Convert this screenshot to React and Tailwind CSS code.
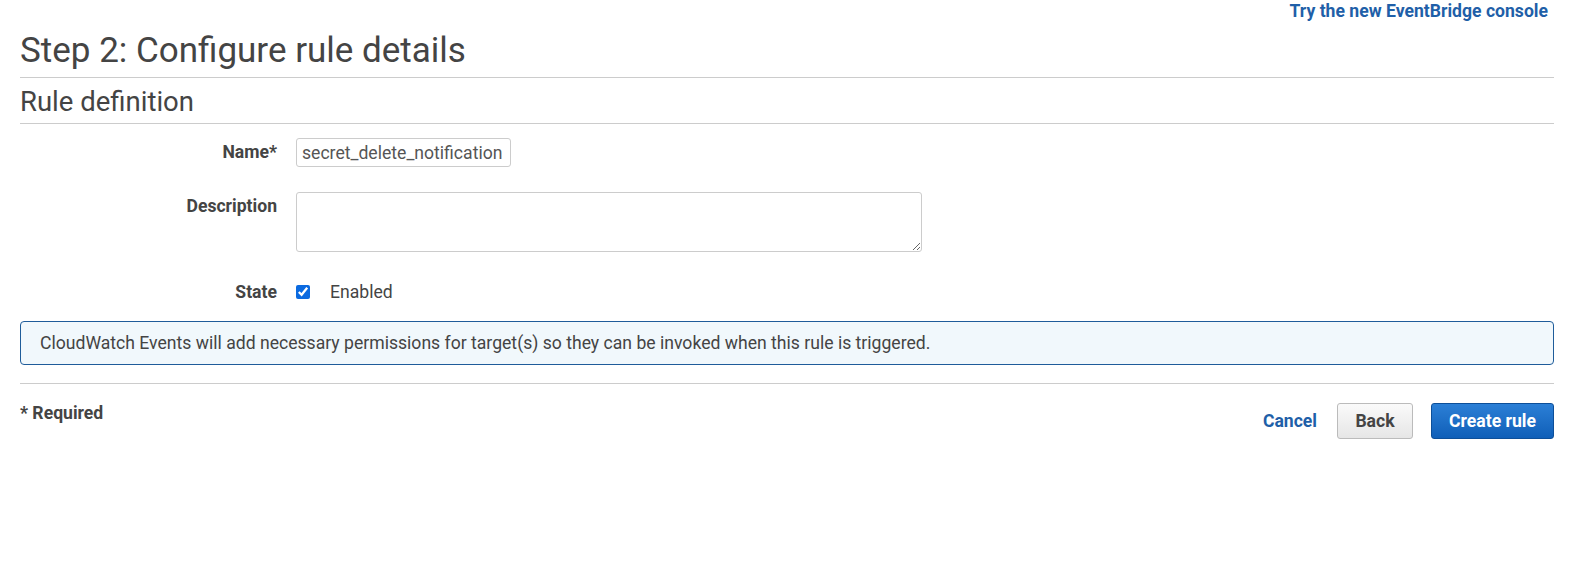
export default function App() {
  return (
    <div className="min-h-[569px] bg-white px-5 text-[#444] font-['Roboto',_'Liberation_Sans',_sans-serif]">
      <div className="flex justify-end pt-[0px] pr-[6px]">
        <a href="#" className="text-[17.6px] font-bold leading-[22px] text-[#1f5fa8]">
          Try the new EventBridge console
        </a>
      </div>

      <h1 className="mt-[8px] pb-[5px] text-[35px] leading-[42px] font-normal text-[#444] border-b border-[#ccc]">
        Step 2: Configure rule details
      </h1>
      <h2 className="pt-[6px] pb-[4px] text-[27.5px] leading-[35px] font-normal text-[#444] border-b border-[#ccc]">
        Rule definition
      </h2>

      <div className="flex flex-col pt-[14px]">
        <div className="flex items-center gap-[19px]">
          <label className="w-[257px] text-right text-[17.6px] font-bold">Name*</label>
          <input
            readOnly
            value="secret_delete_notification"
            className="h-[29px] w-[215px] rounded-[3px] border border-[#ccc] px-[5px] text-[17.6px] text-[#555] outline-none"
          />
        </div>

        <div className="mt-[25px] flex items-start gap-[19px]">
          <label className="w-[257px] pt-[2px] text-right text-[17.6px] leading-[24px] font-bold">Description</label>
          <textarea className="h-[60px] w-[626px] rounded-[3px] border border-[#ccc] px-[6px] outline-none" />
        </div>

        <div className="mt-[27px] flex items-center gap-[19px]">
          <label className="w-[257px] text-right text-[17.6px] font-bold">State</label>
          <div className="flex items-center gap-[20px]">
            <input type="checkbox" defaultChecked className="m-0 h-[14px] w-[14px] accent-[#0b6ae0]" />
            <span className="text-[17.6px] text-[#444]">Enabled</span>
          </div>
        </div>
      </div>

      <div className="mt-[16px] rounded-[4px] border border-[#1f5c9a] bg-[#f1f8fc] px-[19px] py-[10px] text-[17.6px] leading-[22px] text-[#444]">
        CloudWatch Events will add necessary permissions for target(s) so they can be invoked when this rule is triggered.
      </div>

      <div className="mt-[18px] flex items-start justify-between border-t border-[#ccc] pt-[16px]">
        <div className="pt-[1px] text-[17.6px] leading-[24px] font-bold text-[#444]">* Required</div>
        <div className="mt-[3px] flex items-center">
          <a href="#" className="mr-[20px] text-[17.6px] font-bold text-[#1f5fa8]">Cancel</a>
          <button className="mr-[18px] h-[36px] w-[76px] rounded-[3px] border border-[#bbb] bg-gradient-to-b from-[#fafafa] to-[#e6e6e6] text-[17.6px] font-bold text-[#444]">
            Back
          </button>
          <button className="h-[36px] w-[123px] rounded-[3px] border border-[#0d4f99] bg-gradient-to-b from-[#2b7fd6] to-[#0f5fb8] text-[17.6px] font-bold text-white">
            Create rule
          </button>
        </div>
      </div>
    </div>
  );
}
